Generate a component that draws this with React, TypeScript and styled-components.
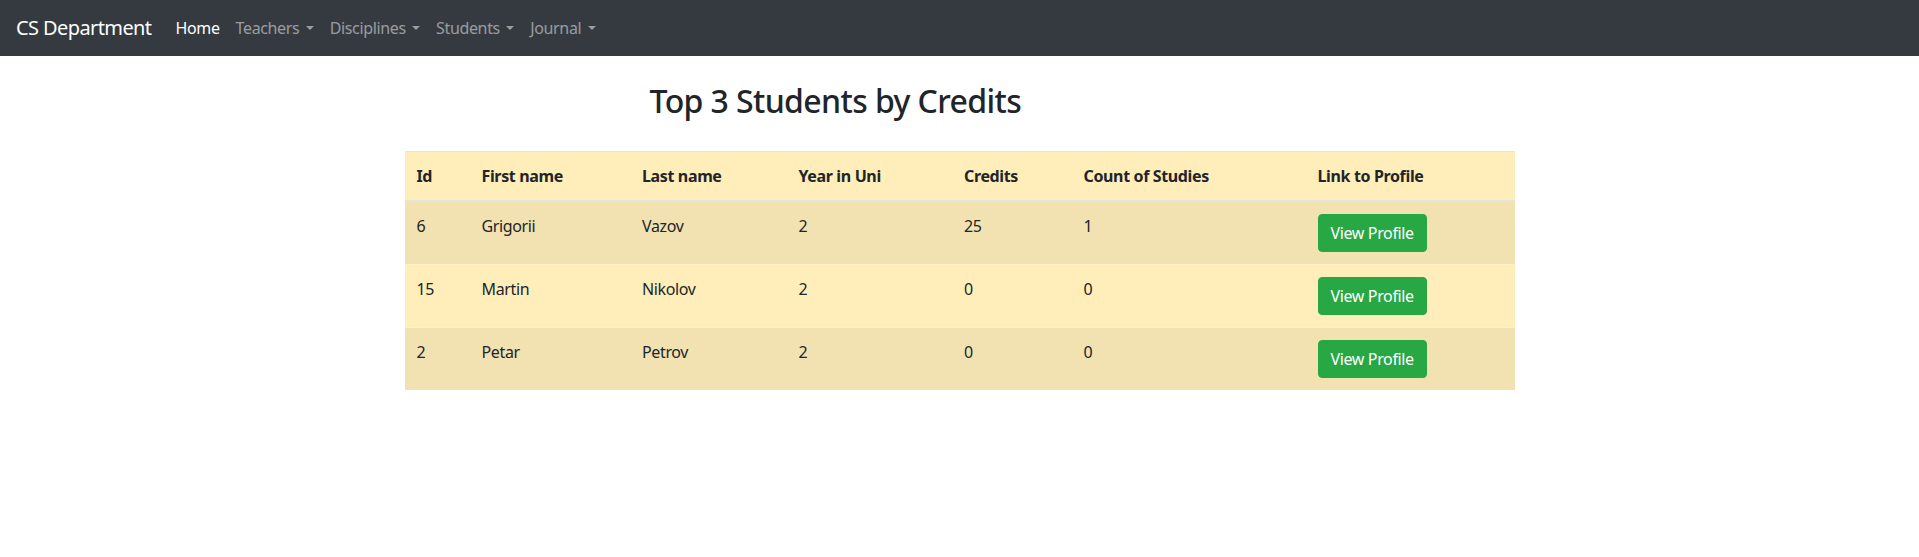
import React from "react";
import styled, { createGlobalStyle } from "styled-components";

const GlobalStyle = createGlobalStyle`
  html, body { margin: 0; padding: 0; background: #fff; }
  body {
    font-family: "Noto Sans", "Open Sans", "Liberation Sans", sans-serif;
    font-size: 16px;
    line-height: 1.5;
    letter-spacing: -0.36px;
    color: #212529;
  }
  * { box-sizing: border-box; }
`;

const NavBar = styled.nav`
  display: flex;
  align-items: center;
  height: 56px;
  padding: 8px 16px;
  background: #343a40;
`;

const Brand = styled.a`
  font-size: 20px;
  line-height: 30px;
  letter-spacing: -0.6px;
  color: #fff;
  margin-right: 16px;
  text-decoration: none;
  white-space: nowrap;
`;

const NavList = styled.ul`
  display: flex;
  list-style: none;
  margin: 0;
  padding: 0;
`;

const NavLink = styled.a<{ $active?: boolean }>`
  display: block;
  padding: 8px 8px;
  font-size: 16px;
  line-height: 24px;
  color: ${(p) => (p.$active ? "#fff" : "rgba(255,255,255,0.5)")};
  text-decoration: none;
  white-space: nowrap;
`;

const Caret = styled.span`
  display: inline-block;
  margin-left: 0.4em;
  vertical-align: 0.255em;
  border-top: 0.3em solid;
  border-right: 0.3em solid transparent;
  border-left: 0.3em solid transparent;
  border-bottom: 0;
`;

const Container = styled.main`
  width: 1140px;
  margin: 0 auto;
  padding: 0 15px;
`;

const Title = styled.h2`
  margin: 26px 0 31px 245px;
  font-size: 32px;
  font-weight: 500;
  line-height: 1.2;
  letter-spacing: -0.6px;
`;

const Table = styled.table`
  width: 100%;
  table-layout: fixed;
  border-collapse: collapse;
  background: #ffeeba;
`;

const HeadCell = styled.th<{ $w: number }>`
  width: ${(p) => p.$w}px;
  padding: 12px;
  text-align: left;
  font-weight: 700;
  vertical-align: bottom;
  border-top: 1px solid #e3e3e3;
  border-bottom: 2px solid #e3e3e3;
`;

const Row = styled.tr<{ $odd: boolean }>`
  background: ${(p) => (p.$odd ? "#f2e2b1" : "#ffeeba")};
`;

const Cell = styled.td`
  padding: 12px;
  vertical-align: top;
  border-top: 1px solid #fff0c6;
`;

const Button = styled.a`
  display: inline-block;
  padding: 6px 12px;
  font-size: 16px;
  line-height: 24px;
  color: #fff;
  background: #28a745;
  border: 1px solid #28a745;
  border-radius: 4px;
  text-decoration: none;
`;

const navItems = [
  { label: "Home", active: true, dropdown: false },
  { label: "Teachers", dropdown: true },
  { label: "Disciplines", dropdown: true },
  { label: "Students", dropdown: true },
  { label: "Journal", dropdown: true },
];

const columns: [string, number][] = [
  ["Id", 65],
  ["First name", 160.5],
  ["Last name", 156.5],
  ["Year in Uni", 165.5],
  ["Credits", 119.5],
  ["Count of Studies", 234],
  ["Link to Profile", 209],
];

const students = [
  { id: 6, first: "Grigorii", last: "Vazov", year: 2, credits: 25, count: 1 },
  { id: 15, first: "Martin", last: "Nikolov", year: 2, credits: 0, count: 0 },
  { id: 2, first: "Petar", last: "Petrov", year: 2, credits: 0, count: 0 },
];

export default function App() {
  return (
    <>
      <GlobalStyle />
      <NavBar>
        <Brand href="#">CS Department</Brand>
        <NavList>
          {navItems.map((n) => (
            <li key={n.label}>
              <NavLink href="#" $active={n.active}>
                {n.label}
                {n.dropdown && <Caret />}
              </NavLink>
            </li>
          ))}
        </NavList>
      </NavBar>
      <Container>
        <Title>Top 3 Students by Credits</Title>
        <Table>
          <thead>
            <tr>
              {columns.map(([c, w]) => (
                <HeadCell key={c} $w={w}>
                  {c}
                </HeadCell>
              ))}
            </tr>
          </thead>
          <tbody>
            {students.map((s, i) => (
              <Row key={s.id} $odd={i % 2 === 0}>
                <Cell>{s.id}</Cell>
                <Cell>{s.first}</Cell>
                <Cell>{s.last}</Cell>
                <Cell>{s.year}</Cell>
                <Cell>{s.credits}</Cell>
                <Cell>{s.count}</Cell>
                <Cell>
                  <Button href="#">View Profile</Button>
                </Cell>
              </Row>
            ))}
          </tbody>
        </Table>
      </Container>
    </>
  );
}
